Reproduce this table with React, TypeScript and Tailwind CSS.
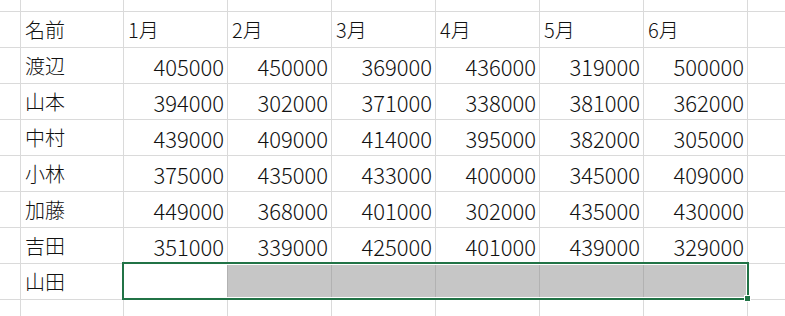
const header = ["名前", "1月", "2月", "3月", "4月", "5月", "6月"];

const rows: [string, number[]][] = [
  ["渡辺", [405000, 450000, 369000, 436000, 319000, 500000]],
  ["山本", [394000, 302000, 371000, 338000, 381000, 362000]],
  ["中村", [439000, 409000, 414000, 395000, 382000, 305000]],
  ["小林", [375000, 435000, 433000, 400000, 345000, 409000]],
  ["加藤", [449000, 368000, 401000, 302000, 435000, 430000]],
  ["吉田", [351000, 339000, 425000, 401000, 439000, 329000]],
];

const font = { fontFamily: '"Noto Sans CJK JP", "Noto Sans", sans-serif' };

function Blank({ gray = false }: { gray?: boolean }) {
  return <div className={gray ? "bg-[#c6c6c6] shadow-[-1px_0_0_#b2b2b2]" : "bg-white"} />;
}

function TextCell({ children }: { children: React.ReactNode }) {
  return (
    <div className="bg-white flex items-center pl-1 text-[20px] font-light leading-none text-[#111]">
      {children}
    </div>
  );
}

function NumCell({ value }: { value: number }) {
  return (
    <div className="bg-white flex items-center justify-end pr-[3px] text-[22px] font-light leading-none text-[#111]">
      {value}
    </div>
  );
}

export default function App() {
  return (
    <div className="relative w-[785px] h-[316px] overflow-hidden bg-white" style={font}>
      <div className="grid grid-cols-[20px_102px_repeat(6,103px)_37px] grid-rows-[11px_repeat(8,35px)_16px] gap-px bg-[#dadada] w-[785px] h-[316px]">
        {/* top partial row */}
        {Array.from({ length: 9 }).map((_, i) => (
          <Blank key={"t" + i} />
        ))}

        {/* header row */}
        <Blank />
        {header.map((h) => (
          <TextCell key={h}>{h}</TextCell>
        ))}
        <Blank />

        {rows.map(([name, vals]) => (
          <div key={name} className="contents">
            <Blank />
            <TextCell>{name}</TextCell>
            {vals.map((v, i) => (
              <NumCell key={i} value={v} />
            ))}
            <Blank />
          </div>
        ))}

        {/* 山田 row, selected */}
        <Blank />
        <TextCell>山田</TextCell>
        <Blank />
        <Blank gray />
        <Blank gray />
        <Blank gray />
        <Blank gray />
        <Blank gray />
        <Blank />

        {/* bottom partial row */}
        {Array.from({ length: 9 }).map((_, i) => (
          <Blank key={"b" + i} />
        ))}
      </div>

      {/* selection frame */}
      <div className="absolute left-[122px] top-[262px] w-[627px] h-[38px] border-2 border-[#217346] shadow-[inset_0_0_0_1px_#ffffff] pointer-events-none" />
      {/* fill handle */}
      <div className="absolute left-[744px] top-[295px] w-[7px] h-[7px] bg-[#217346] border border-white pointer-events-none" />
    </div>
  );
}
